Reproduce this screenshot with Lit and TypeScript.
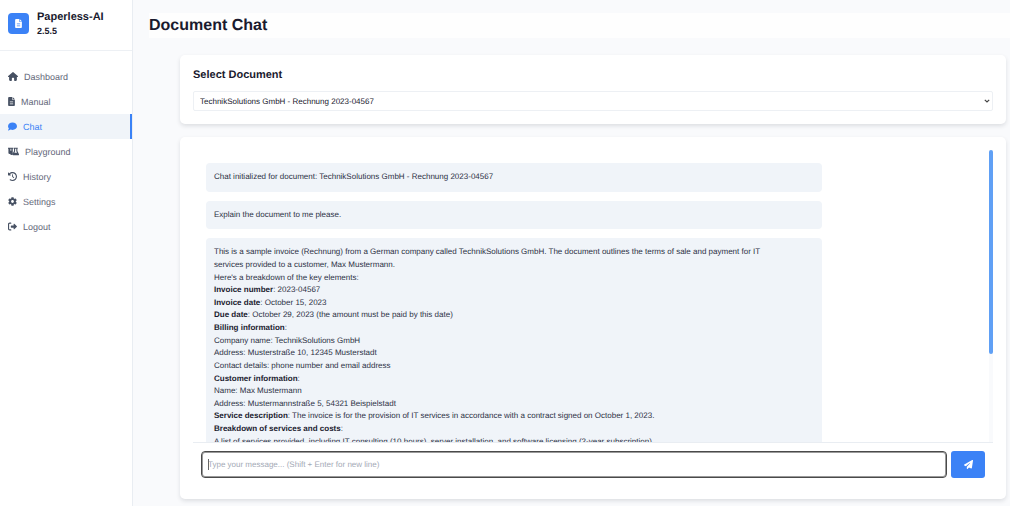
import { LitElement, html, css, svg } from "lit";
import { customElement, property, state } from "lit/decorators.js";

// Icon outlines keyed by name: [viewBox width, path data], all 512 units high.
const ICONS: Record<string, [number, string]> = {
  home: [576, "M575.8 255.5c0 18-15 32.1-32 32.1h-32l.7 160.2c0 35.2-20 64.200-64 64.200H392c-22.100 0-40-17.900-40-40V360c0-17.700-14.300-32-32-32h-64c-17.700 0-32 14.300-32 32v112c0 22.100-17.900 40-40 40h-56c-36 0-64-28-64-64V287.600H32c-18 0-32-14-32-32.100 0-9 3-17 10-24L266.400 8c7-7 15-8 22-8s15 2 21 7l255.400 224.500c8 7 12 15 11 24z"],
  file: [384, "M64 0C28.700 0 0 28.700 0 64v384c0 35.300 28.700 64 64 64h256c35.300 0 64-28.700 64-64V160H256c-17.700 0-32-14.300-32-32V0H64zm192 0v128h128L256 0zM112 256h160c8.800 0 16 7.200 16 16s-7.200 16-16 16H112c-8.800 0-16-7.200-16-16s7.200-16 16-16zm0 64h160c8.800 0 16 7.200 16 16s-7.200 16-16 16H112c-8.800 0-16-7.200-16-16s7.200-16 16-16zm0 64h160c8.800 0 16 7.200 16 16s-7.200 16-16 16H112c-8.800 0-16-7.200-16-16s7.200-16 16-16z"],
  chat: [512, "M512 240c0 114.900-114.600 208-256 208-37.100 0-72.300-6.400-104.100-17.900-11.900 8.700-31.300 20.600-54.300 30.600C73.600 471.100 44.700 480 16 480c-6.500 0-12.300-3.900-14.800-9.900s-1.100-12.800 3.400-17.400l.3-.3c.3-.3.700-.7 1.300-1.400 1.100-1.200 2.800-3.100 4.900-5.700 4.100-5 9.600-12.400 15.200-21.600 10-16.600 19.500-38.400 21.400-62.900C17.700 326.800 0 285.100 0 240 0 125.100 114.600 32 256 32s256 93.100 256 208z"],
  flask: [640, "M0 32h300v64h-24v270c0 50-30 88-74 88-50 0-82-30-82-62-20 20-80 10-96-30V96H0V32zm142 64v110h52V96h-52zM330 32h236v64h-20v130l88 180c20 40-4 74-44 74H304c-44 0-66-36-46-74l92-180V96h-20V32zm84 64v146l-42 84h152l-42-84V96h-68z"],
  history: [512, "M75 75 41 41C26 26 0 37 0 58v110c0 13 11 24 24 24h110c21 0 32-26 17-41l-31-31c35-35 83-56 136-56 106 0 192 86 192 192s-86 192-192 192c-41 0-79-13-110-35-14-10-34-7-45 8-10 14-7 34 8 45 42 29 92 46 147 46 141 0 256-115 256-256S397 0 256 0C185 0 121 29 75 75zm181 53c-13 0-24 11-24 24v104c0 6 3 12 7 17l72 72c9 9 25 9 34 0s9-25 0-34l-65-65v-94c0-13-11-24-24-24z"],
  cog: [512, "M487.400 315.700l-42.600-24.600c4.300-23.200 4.300-47 0-70.200l42.600-24.600c4.900-2.800 7.100-8.600 5.500-14-11.100-35.600-30-67.800-54.700-94.600-3.800-4.100-10-5.100-14.800-2.300L380.800 110c-17.900-15.400-38.500-27.300-60.800-35.100V25.800c0-5.600-3.900-10.500-9.400-11.700-36.700-8.200-74.300-7.800-109.200 0-5.500 1.200-9.400 6.100-9.400 11.700V75c-22.200 7.900-42.800 19.800-60.800 35.100L88.700 85.500c-4.900-2.800-11-1.900-14.800 2.300-24.700 26.700-43.600 58.900-54.700 94.600-1.700 5.400.6 11.200 5.500 14L67.300 221c-4.300 23.200-4.300 47 0 70.200l-42.600 24.600c-4.900 2.800-7.100 8.600-5.500 14 11.100 35.600 30 67.800 54.700 94.600 3.800 4.100 10 5.100 14.800 2.300l42.600-24.600c17.900 15.400 38.500 27.300 60.800 35.100v49.200c0 5.600 3.900 10.500 9.400 11.700 36.700 8.200 74.300 7.800 109.200 0 5.500-1.200 9.400-6.100 9.400-11.700v-49.200c22.200-7.900 42.800-19.800 60.800-35.100l42.600 24.600c4.900 2.800 11 1.900 14.800-2.300 24.700-26.700 43.600-58.900 54.700-94.600 1.500-5.500-.7-11.300-5.600-14.100zM256 336c-44.100 0-80-35.900-80-80s35.900-80 80-80 80 35.900 80 80-35.900 80-80 80z"],
  logout: [512, "M160 96c17.700 0 32-14.300 32-32s-14.300-32-32-32H96C43 32 0 75 0 128v256c0 53 43 96 96 96h64c17.700 0 32-14.300 32-32s-14.300-32-32-32H96c-17.700 0-32-14.300-32-32V128c0-17.700 14.300-32 32-32h64zm344.500 177.400c4.800-4.500 7.500-10.800 7.500-17.400s-2.700-12.900-7.500-17.400l-144-136c-7-6.600-17.200-8.400-26-4.600s-14.500 12.400-14.500 22v72H192c-17.700 0-32 14.300-32 32v64c0 17.700 14.300 32 32 32h128v72c0 9.600 5.700 18.200 14.500 22s19 2 26-4.600l144-136z"],
  send: [512, "M498.100 5.600c10.100 7 15.400 19.100 13.500 31.200l-64 416c-1.500 9.700-7.400 18.200-16 23s-18.900 5.400-28 1.600L284 427.700l-68.500 74.100c-8.900 9.700-22.900 12.900-35.200 8.100S160 493.200 160 480v-83.600c0-4 1.500-7.800 4.200-10.800l167.600-182.900c5.800-6.300 5.600-16-.4-22s-15.700-6.400-22-.7L106 360.800 17.700 316.600C7.100 311.300.3 300.700 0 288.900s5.900-22.800 16.100-28.700l448-256c10.700-6.100 23.900-5.500 34 1.400z"],
};

const icon = (name: string, size: number) => {
  const [width, path] = ICONS[name];
  return html`<svg
    viewBox="0 0 ${width} 512"
    width=${Math.round((size * width) / 512)}
    height=${size}
    fill="currentColor"
    aria-hidden="true"
  >${svg`<path fill-rule="evenodd" d=${path}></path>`}</svg>`;
};

const base = css`
  * { box-sizing: border-box; }
  svg { display: block; flex: none; }
`;

@customElement("side-nav")
export class SideNav extends LitElement {
  @property() current = "Chat";

  private items: [string, string][] = [
    ["home", "Dashboard"],
    ["file", "Manual"],
    ["chat", "Chat"],
    ["flask", "Playground"],
    ["history", "History"],
    ["cog", "Settings"],
    ["logout", "Logout"],
  ];

  static styles = [
    base,
    css`
      :host {
        display: block;
        background: #fff;
        border-right: 1px solid #e9edf2;
      }
      .brand {
        display: flex;
        align-items: center;
        gap: 8px;
        height: 51px;
        padding: 0 8px 3px;
        border-bottom: 1px solid #edf0f4;
      }
      .logo {
        display: grid;
        place-items: center;
        width: 21px;
        height: 21px;
        border-radius: 4px;
        background: #3b82f6;
        color: #fff;
      }
      .name { font-size: 11px; line-height: 14px; font-weight: 700; color: #1a1a2e; }
      .version { font-size: 9px; line-height: 14px; font-weight: 700; color: #1a1a2e; }
      .menu { list-style: none; margin: 0; padding: 13px 0; }
      .link {
        display: flex;
        align-items: center;
        gap: 6px;
        height: 25px;
        padding: 0 8px;
        border-right: 2px solid transparent;
        font-size: 9px;
        color: #64687a;
        text-decoration: none;
      }
      .link svg { color: #475163; }
      .link.active { background: #f0f4f9; border-color: #3b82f6; color: #3b82f6; }
      .link.active svg { color: #3b82f6; }
    `,
  ];

  render() {
    return html`
      <div class="brand">
        <div class="logo">${icon("file", 9)}</div>
        <div>
          <div class="name">Paperless-AI</div>
          <div class="version">2.5.5</div>
        </div>
      </div>
      <nav>
        <ul class="menu">
          ${this.items.map(
            ([glyph, label]) => html`<li>
              <a class="link ${label === this.current ? "active" : ""}" href="#${label.toLowerCase()}">
                ${icon(glyph, 9)}<span>${label}</span>
              </a>
            </li>`,
          )}
        </ul>
      </nav>
    `;
  }
}

@customElement("app-root")
export class AppRoot extends LitElement {
  @state() private scrolled = 0;

  static styles = [
    base,
    css`
      :host {
        display: grid;
        grid-template-columns: 133px minmax(0, 1fr);
        height: 100vh;
        background: #f9fafc;
        color: #1a1a2e;
        font-family: "Liberation Sans", Arial, sans-serif;
        font-size: 8px;
        text-rendering: geometricPrecision;
      }
      .main {
        display: flex;
        flex-direction: column;
        min-height: 0;
        padding: 13px 4px 7px 16px;
      }
      .title {
        margin: 0 -4px 17px 0;
        background: #fefefe;
        font-size: 16px;
        line-height: 25px;
        font-weight: 700;
      }
      .cards {
        display: flex;
        flex: 1;
        flex-direction: column;
        gap: 13px;
        min-height: 0;
        padding-left: 31px;
      }
      .card {
        padding: 13px;
        border-radius: 5px;
        background: #fff;
        box-shadow: 0 2px 4px rgba(15, 23, 42, 0.12);
      }
      .label { display: block; margin-bottom: 9px; font-size: 11px; line-height: 14px; font-weight: 700; }
      .picker { position: relative; }
      .select {
        display: block;
        width: 100%;
        height: 20px;
        padding: 0 6px;
        border: 1px solid #edf0f4;
        border-radius: 2px;
        appearance: none;
        background: #fff;
        color: #1a1a2e;
        font: inherit;
        text-rendering: inherit;
      }
      .chevron { position: absolute; right: 3px; top: 8px; pointer-events: none; }
      .chat { display: flex; flex: 1; flex-direction: column; min-height: 0; padding-bottom: 21px; }
      .log { display: flex; flex: 1; min-height: 0; border-bottom: 1px solid #e9edf2; }
      .messages {
        display: flex;
        flex: 1;
        flex-direction: column;
        gap: 9px;
        overflow: hidden;
        padding: 13px;
      }
      .message {
        flex: none;
        width: 80%;
        padding: 8px;
        border-radius: 4px;
        background: #f0f4f9;
        color: #2c3044;
        line-height: 1.58;
      }
      .message b { color: #1a1a2e; }
      .track { width: 4px; background: #f9fafc; }
      .thumb { border-radius: 2px; background: #60a0f5; }
      .compose { display: flex; gap: 4px; padding: 8px 8px 0; }
      .field { position: relative; display: flex; flex: 1; }
      .field::before {
        content: "";
        position: absolute;
        left: 7px;
        top: 8px;
        width: 1px;
        height: 11px;
        background: #666;
      }
      .input {
        flex: 1;
        height: 27px;
        padding: 7px 6px;
        border: 1px solid #4a4a4a;
        border-radius: 4px;
        box-shadow: inset 0 0 0 1px #9a9a9a;
        outline: none;
        resize: none;
        overflow: hidden;
        background: #fff;
        color: #1a1a2e;
        font: inherit;
        line-height: 11px;
        text-rendering: inherit;
      }
      .input::placeholder { color: #a3a9b5; }
      .send {
        display: grid;
        place-items: center;
        width: 34px;
        height: 27px;
        padding: 0;
        border: 0;
        border-radius: 3px;
        background: #3b82f6;
        color: #fff;
      }
    `,
  ];

  render() {
    return html`
      <side-nav current="Chat"></side-nav>
      <main class="main">
        <h1 class="title">Document Chat</h1>
        <div class="cards">
          <section class="card">
            <label class="label" for="document">Select Document</label>
            <div class="picker">
              <select class="select" id="document">
                <option>TechnikSolutions GmbH - Rechnung 2023-04567</option>
              </select>
              <svg class="chevron" width="6" height="4" viewBox="0 0 6 4" fill="none" stroke="#444" stroke-width="1.200" aria-hidden="true">
                <path d="M.8.8 3 3 5.200.8"></path>
              </svg>
            </div>
          </section>
          <section class="card chat">
            <div class="log">
              <div class="messages">
                <div class="message">Chat initialized for document: TechnikSolutions GmbH - Rechnung 2023-04567</div>
                <div class="message">Explain the document to me please.</div>
                <div class="message">
                  <div>
                    This is a sample invoice (Rechnung) from a German company called TechnikSolutions GmbH. The
                    document outlines the terms of sale and payment for IT<br />
                    services provided to a customer, Max Mustermann.
                  </div>
                  <div>Here's a breakdown of the key elements:</div>
                  <div><b>Invoice number</b>: 2023-04567</div>
                  <div><b>Invoice date</b>: October 15, 2023</div>
                  <div><b>Due date</b>: October 29, 2023 (the amount must be paid by this date)</div>
                  <div><b>Billing information</b>:</div>
                  <div>Company name: TechnikSolutions GmbH</div>
                  <div>Address: Musterstraße 10, 12345 Musterstadt</div>
                  <div>Contact details: phone number and email address</div>
                  <div><b>Customer information</b>:</div>
                  <div>Name: Max Mustermann</div>
                  <div>Address: Mustermannstraße 5, 54321 Beispielstadt</div>
                  <div>
                    <b>Service description</b>: The invoice is for the provision of IT services in accordance with a
                    contract signed on October 1, 2023.
                  </div>
                  <div><b>Breakdown of services and costs</b>:</div>
                  <div>
                    A list of services provided, including IT consulting (10 hours), server installation, and software
                    licensing (2-year subscription).
                  </div>
                </div>
              </div>
              <div class="track"><div class="thumb" style="height: 70%; margin-top: ${this.scrolled}px"></div></div>
            </div>
            <form class="compose" @submit=${(e: Event) => e.preventDefault()}>
              <div class="field">
                <textarea
                  class="input"
                  rows="1"
                  aria-label="Message"
                  placeholder="Type your message... (Shift + Enter for new line)"
                ></textarea>
              </div>
              <button class="send" type="submit" aria-label="Send">${icon("send", 9)}</button>
            </form>
          </section>
        </div>
      </main>
    `;
  }
}
